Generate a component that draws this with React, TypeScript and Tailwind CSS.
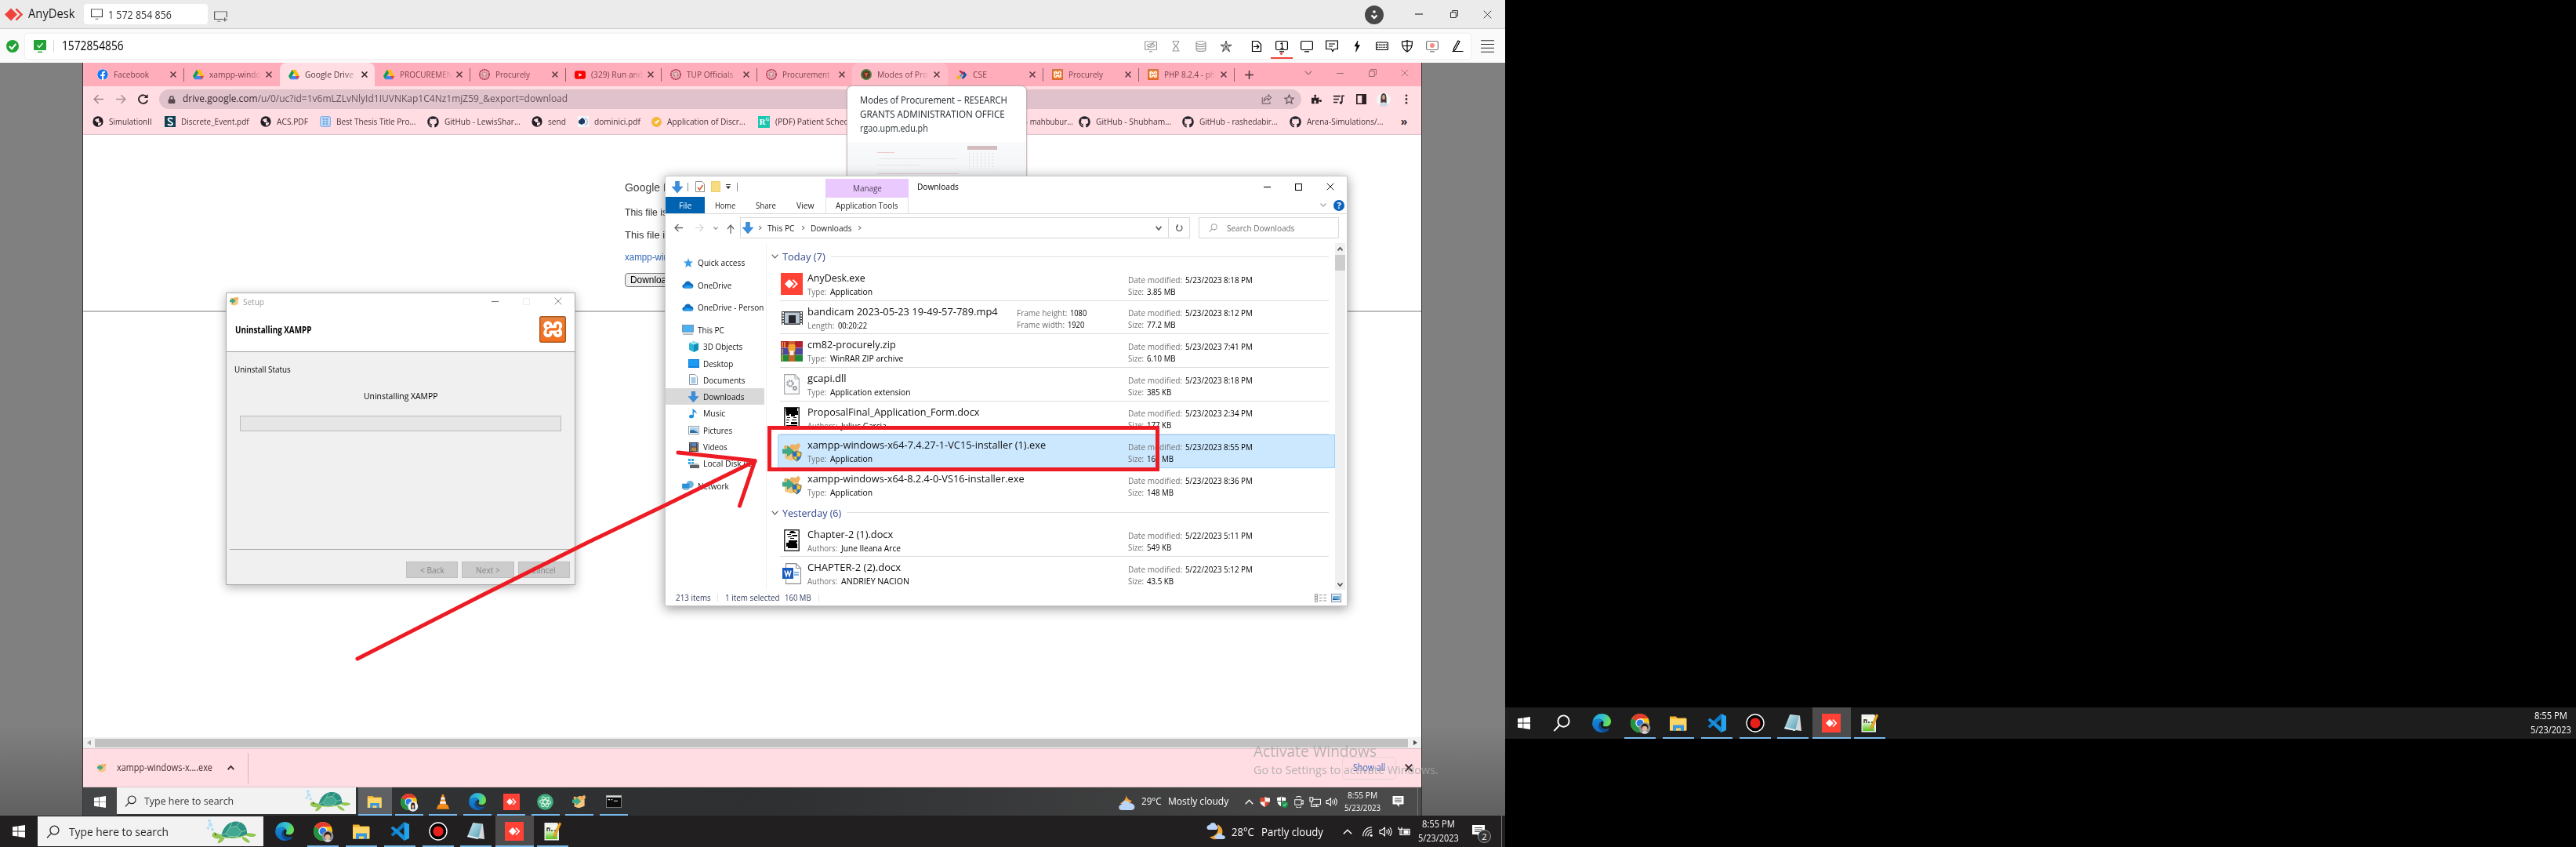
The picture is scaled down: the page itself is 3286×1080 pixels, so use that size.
import { useLayoutEffect, useRef, type ReactNode } from "react";
import { FaGithub, FaFacebook, FaLock, FaPuzzlePiece } from "react-icons/fa";

/* Single-line label squeezed horizontally to the width class it is given. */
function Fit({ c, children }: { c: string; children: ReactNode }) {
  const outer = useRef<HTMLSpanElement>(null);
  const inner = useRef<HTMLSpanElement>(null);
  useLayoutEffect(() => {
    const o = outer.current!;
    const i = inner.current!;
    i.style.transform = `scaleX(${parseFloat(getComputedStyle(o).width) / i.offsetWidth})`;
  });
  return (
    <span ref={outer} className={`inline-block shrink-0 whitespace-nowrap ${c}`}>
      <span ref={inner} className="inline-block origin-left">
        {children}
      </span>
    </span>
  );
}

function S({ c = "size-4", sw = 1.2, children, vb = "0 0 16 16" }: { c?: string; sw?: number; children: ReactNode; vb?: string }) {
  return (
    <svg viewBox={vb} className={`shrink-0 ${c}`} fill="none" stroke="currentColor" strokeWidth={sw} preserveAspectRatio="none">
      {children}
    </svg>
  );
}

/* ---------- generic glyphs ---------- */
const X = ({ c, sw = 1.2 }: { c: string; sw?: number }) => (
  <S c={c} sw={sw} vb="0 0 10 10"><path d="M.7.7l8.6 8.6M9.3.7L.7 9.3" /></S>
);
const Minus = ({ c }: { c: string }) => <S c={c} vb="0 0 10 10"><path d="M0 5h10" /></S>;
const Restore = ({ c }: { c: string }) => (
  <S c={c} sw={1} vb="0 0 10 10"><path d="M.5 2.7h6.8v6.8H.5zM2.6 2.7V.5h6.9v6.8H7.3" /></S>
);
const Down = ({ c, sw = 1.2 }: { c: string; sw?: number }) => <S c={c} sw={sw} vb="0 0 10 6"><path d="M.7.7L5 5 9.3.7" /></S>;
const Up = ({ c, sw = 1.2 }: { c: string; sw?: number }) => <S c={c} sw={sw} vb="0 0 10 6"><path d="M.7 5.3L5 1l4.3 4.3" /></S>;
const Right = ({ c }: { c: string }) => <S c={c} sw={1.5} vb="0 0 6 10"><path d="M1.5 1.5L4.8 5 1.5 8.5" /></S>;
const Lens = ({ c, sw = 1.3 }: { c: string; sw?: number }) => (
  <S c={c} sw={sw}><circle cx="9.8" cy="6.2" r="5.2" /><path d="M6 10L1 15.3" /></S>
);
const Star = ({ c, sw = 1.2 }: { c: string; sw?: number }) => (
  <S c={c} sw={sw}><path d="M8 1.3l2 4.7 5 .4-3.8 3.3 1.2 5L8 12l-4.4 2.7 1.2-5L1 6.4 6 6z" /></S>
);

/* ---------- logos ---------- */
const Drive = () => (
  <svg viewBox="0 0 16 14" className="size-[14px] shrink-0">
    <path d="M5.3 0h5.4L16 9.2h-5.3z" fill="#ffba00" />
    <path d="M5.3 0L8 4.7 2.7 14 0 9.2z" fill="#0f9d58" />
    <path d="M5.3 9.2H16L13.3 14H2.7z" fill="#4285f4" />
    <path d="M10.7 9.2H16L13.3 14z" fill="#ea4335" />
  </svg>
);
const Seal = ({ green = false }: { green?: boolean }) => (
  <svg viewBox="0 0 16 16" className="size-[14px] shrink-0">
    <circle cx="8" cy="8" r="7" fill={green ? "#2f5b33" : "#e9b8bf"} stroke={green ? "#5b7a3c" : "#b93a55"} strokeWidth="2" strokeDasharray={green ? "" : "2.6 .5"} />
    <circle cx="8" cy="8" r="4.4" fill={green ? "#7d2a24" : "#cf8f98"} />
    <path d="M6 6l2 1.5L10 6M8 7v4" stroke={green ? "#d8a24a" : "#f6e2e4"} strokeWidth="1.2" fill="none" />
  </svg>
);
const YouTube = () => (
  <svg viewBox="0 0 16 12" className="h-[11px] w-[14px] shrink-0"><rect width="16" height="12" rx="2.8" fill="#f00" /><path d="M6.2 3.4v5.2L11 6z" fill="#fff" /></svg>
);
const Cse = () => (
  <svg viewBox="0 0 16 14" className="h-[11px] w-[14px] shrink-0">
    <path d="M3 0h4l4 5-2 2z" fill="#d5202f" /><path d="M9 2l3 0 4 5-5 6H7l4-6z" fill="#1d4fa1" /><path d="M0 7l3 3 3-3 1 3-3 4H0z" fill="#f6b516" /><path d="M4 6h4l1 1-3 4z" fill="#36a5c8" />
  </svg>
);
const Xampp = ({ c }: { c: string }) => (
  <svg viewBox="0 0 34 34" className={`shrink-0 ${c}`}>
    <defs><linearGradient id="xg" x1="0" y1="0" x2="0" y2="1"><stop offset="0" stopColor="#e08a50" /><stop offset=".18" stopColor="#ee7a2e" /><stop offset="1" stopColor="#f37021" /></linearGradient></defs>
    <rect x=".7" y=".7" width="32.6" height="32.6" rx="2" fill="url(#xg)" stroke="#a8571e" strokeWidth="1.4" />
    <g fill="#fff">
      <circle cx="11" cy="12.3" r="5.7" /><circle cx="23.500" cy="12.300" r="5.700" /><circle cx="11" cy="21.500" r="5.700" /><circle cx="23.500" cy="21.500" r="5.700" />
      <path d="M11 12h12.500v10H11z" />
    </g>
    <g fill="none" stroke="#f37021" strokeWidth="3.300" strokeLinecap="round" strokeLinejoin="round">
      <path d="M11 12.400v.1M23.500 12v3.300l-1.500 1.500h-8.500l-2.500 2v2.700M23.500 21.500v.1" />
    </g>
  </svg>
);
const AnyMark = ({ c, a = "#ef443b" }: { c: string; a?: string }) => (
  <svg viewBox="0 0 24 16" className={`shrink-0 ${c}`}>
    <path d="M8 0l8 8-8 8-8-8z" fill={a} />
    <path d="M13.500 1.800L15.300 0l8 8-8 8-1.800-1.800L19.700 8z" fill={a} />
  </svg>
);
const AnyTile = ({ c }: { c: string }) => (
  <span className={`flex shrink-0 items-center justify-center bg-[#ff4136] ${c}`}><AnyMark c="h-[42%] w-[62%]" a="#fff" /></span>
);
const Win = ({ c, f = "#fff" }: { c: string; f?: string }) => (
  <svg viewBox="0 0 16 16" className={`shrink-0 ${c}`} fill={f}><path d="M0 2.300l6.500-.9v6.200H0zM7.300 1.300L16 0v7.600H7.300zM0 8.400h6.500v6.200L0 13.700zM7.300 8.400H16V16l-8.700-1.300z" /></svg>
);
const Edge = ({ c }: { c: string }) => (
  <svg viewBox="0 0 24 24" className={`shrink-0 ${c}`}>
    <defs>
      <linearGradient id="e1" x1="0" y1="0" x2="1" y2=".3"><stop offset="0" stopColor="#1f9be0" /><stop offset=".6" stopColor="#35c1d0" /><stop offset="1" stopColor="#66e04e" /></linearGradient>
      <linearGradient id="e2" x1="0" y1="0" x2="0" y2="1"><stop offset="0" stopColor="#1688d6" /><stop offset="1" stopColor="#1066bd" /></linearGradient>
    </defs>
    <path d="M.3 11C1.200 4.500 6 0 12.200 0 19 0 24 4.800 24 10c0 4-3 6.300-6.500 6.300-2.700 0-4-1-3.800-2 .2-.7.900-1 .9-2.600C14.600 9 12 6.800 8.500 6.800 4.500 6.800 1.600 8.600.3 11z" fill="url(#e1)" />
    <path d="M.2 11.500C1.500 8.300 5 6.600 8.400 6.800c2.600.1 4.700 1.300 5.600 2.900-1.700-.5-3.800 1-3.800 3.800 0 4 4 6.800 8 6.300 2-.2 3.300-.8 3.800-.7-2 3-5.600 4.900-9.800 4.900C5 24-.5 18 .2 11.500z" fill="url(#e2)" />
    <path d="M10.300 12.500c-.9 4.500 3 8.700 7.900 8 2-.2 3.500-1.200 3.900-1.100-1 1.800-3 3.300-5.200 4.100C10 22.500 6.500 17.500 8.600 13c.6-1.400 1.500-2.600 2.900-3.200-.6.6-1 1.500-1.200 2.700z" fill="#0c4a91" />
  </svg>
);
const Chrome = ({ c, girl = false }: { c: string; girl?: boolean }) => (
  <svg viewBox="0 0 24 24" className={`shrink-0 overflow-visible ${c}`}>
    <circle cx="12" cy="12" r="12" fill="#fbc116" />
    <path d="M12 12L1.600 6A12 12 0 0 1 22.400 6H12z" fill="#e33b2e" />
    <path d="M12 12L1.600 6A12 12 0 0 0 12 24l5.200-9z" fill="#229342" />
    <circle cx="12" cy="12" r="5.700" fill="#fff" /><circle cx="12" cy="12" r="4.500" fill="#2a79e8" />
    <circle cx="18" cy="18.500" r="7.300" fill={girl ? "#f2f2f4" : "#8d9094"} />
    <path d={girl ? "M15 24c0-10 0-11 3-11s3 1 3 11z" : "M13.500 18c0-7 9-7 9 0l-1 1h-7z"} fill="#2c211e" />
    <ellipse cx="18" cy="18.800" rx={girl ? 1.700 : 3.200} ry={girl ? 2.500 : 3.700} fill="#e4b496" />
    {!girl && <path d="M14.500 17.500c1-2 6-2 7 0l.5-2.500c-2-2-6-2-8 0z" fill="#2c211e" />}
    <path d="M14 24c1-2.500 7-2.500 8 0-2 2.200-6 2.200-8 0z" fill={girl ? "#dfe3ea" : "#d8d8d8"} />
  </svg>
);
const Explorer = ({ c }: { c: string }) => (
  <svg viewBox="0 0 24 24" className={`shrink-0 ${c}`}>
    <path d="M1 3.500h8l1.500 2H22v16H1z" fill="#f3b32c" /><path d="M1 6.500h21.500v15H1z" fill="#fdd667" />
    <path d="M5 22v-7.500h14V22h-4v-3.600h-6V22z" fill="#3a96dd" />
  </svg>
);
const VsCode = ({ c }: { c: string }) => (
  <svg viewBox="0 0 24 24" className={`shrink-0 ${c}`}>
    <path d="M17.500 0L24 3v18l-6.500 3z" fill="#24a3ee" />
    <path d="M17.500 0v6.700L3.200 18.500.5 16z" fill="#0e79c4" /><path d="M17.500 24v-6.700L3.200 5.500.5 8z" fill="#1a8fdc" />
  </svg>
);
const Rec = ({ c }: { c: string }) => (
  <svg viewBox="0 0 24 24" className={`shrink-0 ${c}`}><circle cx="12" cy="12" r="11" fill="#000" stroke="#fff" strokeWidth="1.400" /><circle cx="12" cy="12" r="6.600" fill="#e8201c" /></svg>
);
const Notepad = ({ c }: { c: string }) => (
  <svg viewBox="0 0 24 24" className={`shrink-0 ${c}`}>
    <defs><linearGradient id="np" x1="0" y1="0" x2="1" y2="1"><stop offset="0" stopColor="#cdeaf1" /><stop offset="1" stopColor="#4f9bb0" /></linearGradient></defs>
    <path d="M8 1l13 1.500L23 22l-8-1z" fill="#d5d8da" /><path d="M8 1.500l12 1.500-5 19L1 19z" fill="url(#np)" /><path d="M1 19l14 3 .5-1.700L2 17z" fill="#e9f3f5" />
  </svg>
);
const Npp = ({ c }: { c: string }) => (
  <svg viewBox="0 0 24 24" className={`shrink-0 ${c}`}>
    <defs><linearGradient id="pp" x1="0" y1="0" x2="0" y2="1"><stop offset=".3" stopColor="#f5fbe9" /><stop offset="1" stopColor="#5cc31c" /></linearGradient></defs>
    <path d="M1.500 1H18l2 3v19.500H1.500z" fill="#eee" /><path d="M3 4h15v18H3z" fill="url(#pp)" />
    <path d="M5 7v5M5 8h3v4M10 11h2M14 11h2" stroke="#333" strokeWidth="1.400" fill="none" />
    <path d="M20.500.5l2.500 1.500-7 16-3 2 .5-3.500z" fill="#f3a91f" stroke="#a86a12" strokeWidth=".5" />
  </svg>
);
const Vlc = ({ c }: { c: string }) => (
  <svg viewBox="0 0 24 24" className={`shrink-0 ${c}`} preserveAspectRatio="none">
    <path d="M4 16h16l3 6.500H1z" fill="#f08a16" /><path d="M10.500 1h3l5 17c-3 2-10 2-13 0z" fill="#f28c1a" />
    <path d="M9.300 5h5.400l1 3.500H8.300zM7.500 11h9l1 3.500h-11z" fill="#f1f1f1" />
  </svg>
);
const Atom = ({ c }: { c: string }) => (
  <svg viewBox="0 0 24 24" className={`shrink-0 ${c}`}>
    <circle cx="12" cy="12" r="11.800" fill="#3fae7c" />
    <g fill="none" stroke="#e4f5ec" strokeWidth="1.200"><ellipse cx="12" cy="12" rx="3" ry="8" transform="rotate(-25 12 12)" /><ellipse cx="12" cy="12" rx="3" ry="8" transform="rotate(35 12 12)" /><ellipse cx="12" cy="12" rx="3" ry="8" transform="rotate(95 12 12)" /></g>
  </svg>
);
const Cmd = ({ c }: { c: string }) => (
  <svg viewBox="0 0 24 20" className={`shrink-0 ${c}`} preserveAspectRatio="none"><rect x=".5" y=".5" width="23" height="19" fill="#0b0b0b" stroke="#8f8f8f" /><path d="M.5.500h23v3H.5z" fill="#d8d8d8" /><path d="M3 7h3M8 7h2M12 9h6" stroke="#e4e4e4" strokeWidth="1.400" /></svg>
);
const Box = ({ c, shield = false }: { c: string; shield?: boolean }) => (
  <svg viewBox="0 0 28 28" className={`shrink-0 overflow-visible ${c}`}>
    <path d="M4 4l7 2 2-3h3l3 1 5-3 3 4-3 5v13l-11 4-9-3V10L2 7z" fill="#eeb061" />
    <path d="M5 10l9 1.500 10-1.500v13l-11 4-8-3z" fill="#f6c77f" />
    <path d="M0 10h7V5l11 8.500L7 22v-5H0z" fill="#3fa887" />
    {shield && (
      <g>
        <path d="M15 15c3-.3 4.500-1 6.500-2.500 2 1.500 3.200 2.200 6.500 2.500.3 6.500-2 10.500-6.500 13-4.500-2.500-6.800-6.500-6.500-13z" fill="#f7c32b" stroke="#3d4a56" strokeWidth="1" />
        <path d="M15.500 15.400c2.800-.3 4.300-1 6-2.200v8h-5.300zM21.500 21.200h5.500c-1 3-2.700 5-5.500 6.300z" fill="#1c6fd0" />
      </g>
    )}
  </svg>
);
const Turtle = ({ c }: { c: string }) => (
  <svg viewBox="0 0 64 32" className={`shrink-0 ${c}`} preserveAspectRatio="none">
    <g fill="#bfe6fb" stroke="#86c8ee" strokeWidth=".5"><circle cx="4" cy="2.500" r="1.600" /><circle cx="5.500" cy="7.500" r="2.200" /><circle cx="2.500" cy="12" r="1.300" /><circle cx="8" cy="13.500" r="1.500" /></g>
    <path d="M22 20c-4 1-7-1-11-3-4 1-5 6 0 7.500 4 2 8 .5 12-1.500z" fill="#93c552" />
    <path d="M20 23c-3 2-5 5-5.500 8 3 1 7-2 9.500-7zM50 18c5 .5 9 0 14 2-1 4-8 4-14 1zM47 23c4 1 8 4 9 7-3 2-8-2-11-6z" fill="#93c552" />
    <path d="M19 22C22 9 30 3 39 3.500c9 .5 14 8 13 17-10 4-24 6-33 1.500z" fill="#2d9186" />
    <path d="M25 19l5-8 9-1.500 6 7-4 6H29z" fill="#43a892" stroke="#8bd3a5" strokeWidth=".9" />
    <path d="M30 11l3-6M39 9.500l4-5.500M45 16.500l7-2M25 19l-6 2M29 22.500v1.500M41 22.500l1 1" stroke="#8bd3a5" strokeWidth=".9" fill="none" />
    <path d="M19 22c9 4.500 23 3 33-1.500" stroke="#b7d96f" strokeWidth="1.200" fill="none" />
    <circle cx="12" cy="19.800" r=".9" fill="#222" />
  </svg>
);
const Moon = ({ c, two = false }: { c: string; two?: boolean }) => (
  <svg viewBox="0 0 24 24" className={`shrink-0 ${c}`}>
    <path d={two ? "M14 3c6 3 9 10 4 16-4 4.500-11 4-14 0 8 0 13-7 10-16z" : "M11 1c0 5 4 9 8 9-2 6-9 9-17 4 6-2 9-7 9-13z"} fill="#f3a32d" />
    <path d={two ? "M3 10c-4-1-3-6 1-6 1-4 8-4 8 0 4 1 3 6 0 6zM13 22c-4-1-3-5 0-5 1-4 7-3 7 0 5 0 5 5 1 5z" : "M4 24c-6-1-4-8 0-8 1-7 10-8 12-2 8-1 10 9 3 10z"} fill="#b9d4f8" />
  </svg>
);
const Volume = ({ c }: { c: string }) => (
  <S c={c} sw={1.100}><path d="M1 6v4h2.500L7 13V3L3.500 6zM9 6c1 1 1 3 0 4M11 4.500c2 2 2 5 0 7M13 3c3 3 3 7 0 10" /></S>
);
const Note = ({ c }: { c: string }) => (
  <svg viewBox="0 0 16 16" className={`shrink-0 ${c}`}><path d="M0 0h16v12H9.500v4L6 12H0z" fill="#fff" /><path d="M3 3.500h10M3 6h10M3 8.500h10" stroke="#444" strokeWidth="1" /></svg>
);

/* ---------- AnyDesk chrome ---------- */
function TitleBar() {
  return (
    <div className="flex h-[37px] items-center border-b border-[#cdcdcd] bg-[#ebebeb] pl-1.5 text-[15.500px] text-[#1a1a1a]">
      <AnyMark c="h-[17px] w-6" />
      <Fit c="ml-1.5 w-[60px] font-medium">AnyDesk</Fit>
      <div className="ml-[11px] flex h-[26px] w-[158px] items-center rounded-sm bg-white pl-[9px] text-[14px] text-[#333]">
        <S c="h-[14px] w-[15px] text-[#333]" sw={1.100}><path d="M.6 1h14.800v11H.6zM6 15h4" /></S>
        <Fit c="ml-[7px] w-[81px]">1 572 854 856</Fit>
      </div>
      <S c="ml-2 mt-1.5 h-[14px] w-[17px] text-[#555]" sw={1.100}><path d="M10 12H.6V1h14.800v8M13 9.500v6M10 12.500h6M4 15h4" /></S>
      <div className="ml-auto flex items-center pr-[17px] text-[#333]">
        <svg viewBox="0 0 24 24" className="mt-px size-6"><circle cx="12" cy="12" r="12" fill="#484848" /><circle cx="12" cy="8" r="1.800" fill="#fff" /><path d="M8.500 12.500L12 16l3.500-3.500" stroke="#fff" strokeWidth="2.400" fill="none" /></svg>
        <Minus c="ml-[40px] size-[10px]" />
        <Restore c="ml-[35px] size-[10px]" />
        <X c="ml-[32px] size-[11px]" sw={0.9} />
      </div>
    </div>
  );
}

function Cell({ children, on = false, dim = false }: { children: ReactNode; on?: boolean; dim?: boolean }) {
  return (
    <div className={`relative flex w-8 items-center justify-center ${dim ? "text-[#999]" : "text-black"}`}>
      <S c="size-4" sw={1.200}>{children}</S>
      {on && <span className="absolute -bottom-[8px] left-[2px] h-[2px] w-7 bg-[#ef443b]" />}
      {on && <span className="absolute -bottom-[3px] left-[14px] size-[3px] rounded-full bg-[#ef443b]" />}
    </div>
  );
}

function AddressBar() {
  return (
    <div className="flex h-[43px] items-center bg-[#fafafa] pl-2">
      <svg viewBox="0 0 16 16" className="size-4 shrink-0"><circle cx="8" cy="8" r="8" fill="#23a335" /><path d="M4 8l3 3.500L12.300 5" stroke="#fff" strokeWidth="2" fill="none" /></svg>
      <div className="ml-2 flex h-8 w-[1844px] items-center rounded-sm bg-white pl-[11px] shadow-[0_0_2px_1px_#eeeeee]">
        <svg viewBox="0 0 16 16" className="size-4"><rect width="16" height="13" rx="1" fill="#23a335" /><path d="M4.500 6.500l2.500 3L11.500 4" stroke="#fff" strokeWidth="1.200" fill="none" /><path d="M5 15.300h6" stroke="#23a335" strokeWidth="1.400" /></svg>
        <span className="ml-[9px] h-4 w-px bg-[#d5d5d5]" />
        <Fit c="ml-[10px] w-[79px] text-[15.500px] text-black">1572854856</Fit>
        <div className="ml-auto flex pr-px">
          <Cell dim><rect x=".6" y="2" width="14.800" height="10.500" rx="1" /><path d="M3 7c2-3 8-3 10 0-2 3-8 3-10 0zM4 11l8-8M6 14.800h4" /></Cell>
          <Cell dim><path d="M3.500 1.500h9M3.500 14h9M4.500 1.500c0 4 3 4.500 3 6.200S4.500 10 4.500 14M11.500 1.500c0 4-3 4.500-3 6.200s3 2.300 3 6.300" /></Cell>
          <Cell dim><ellipse cx="8" cy="3.500" rx="6" ry="2" /><path d="M2 3.500v9c0 2.600 12 2.600 12 0v-9M2 6.500c0 2.600 12 2.600 12 0M2 9.500c0 2.600 12 2.600 12 0" /></Cell>
          <Cell><path d="M8 1.300l1.700 5H15l-4.300 3.100 1.700 5.300L8 11.500l-4.400 3.200 1.700-5.300L1 6.300h5.300zM8 1.300v10.200M1 6.300l7 2 7-2M3.600 14.700L8 8.300l4.400 6.400" strokeWidth=".6" /></Cell>
          <span className="w-[7px]" />
          <Cell><path d="M2.500 14.500v-13h7l4 4v9zM4 8.500h6.500M8 5.800l2.800 2.700L8 11.200" /></Cell>
          <Cell on><rect x=".6" y="1.500" width="14.800" height="11" rx="1.500" /><path d="M6.500 5l2-1.300V11M6.500 10.700h4M5 14.800h6" /></Cell>
          <Cell><rect x=".6" y="1.500" width="14.800" height="11" rx="1.500" /><path d="M5 14.800h6" /></Cell>
          <Cell><path d="M.6 1h14.800v10.500H11L9 14.500l-1.500-3H.6zM4 5h8M4 8h5" /></Cell>
          <Cell><path d="M9 1L5 8h3l-1.500 7L11.500 6.500H8.300z" fill="#000" strokeWidth=".6" /></Cell>
          <Cell><rect x=".6" y="3" width="14.800" height="9.500" rx="1" /><path d="M2 5.500h12M2 7.500h12M2 9.500h12" strokeDasharray="1 .8" /></Cell>
          <Cell><path d="M1.500 2C5 2 7 1.700 8 .8 9 1.700 11 2 14.500 2c0 6-1 10-6.500 13C2.500 12 1.500 8 1.500 2zM8 1v14M1.500 7.500h13" /></Cell>
          <Cell><g stroke="#777"><rect x=".6" y="1.500" width="14.800" height="11" rx="1.500" /><path d="M5 14.800h6" /></g><circle cx="8" cy="7" r="3" fill="#f58c87" stroke="none" /></Cell>
          <Cell><path d="M1.500 14.500h14M9 1L3.500 11l-.3 3 2.300-2L11 2z" /></Cell>
        </div>
      </div>
      <S c="ml-[13px] h-4 w-[17px] text-[#333]" sw={1}><path d="M0 .7h16M0 5.500h16M0 10.300h16M0 15.200h16" /></S>
    </div>
  );
}

/* ---------- remote browser ---------- */
type TabData = { icon: ReactNode; t: string; w: string; state?: "active" | "hover"; sep?: boolean };
const tabs: TabData[] = [
  { icon: <FaFacebook className="size-[14px] rounded-full bg-white text-[#1877f2]" />, t: "Facebook", w: "w-[45px]", sep: true },
  { icon: <Drive />, t: "xampp-windo", w: "w-[66px]" },
  { icon: <Drive />, t: "Google Drive", w: "w-[62px]", state: "active" },
  { icon: <Drive />, t: "PROCUREMEN", w: "w-[67px]", sep: true },
  { icon: <Seal />, t: "Procurely", w: "w-[44px]", sep: true },
  { icon: <YouTube />, t: "(329) Run and", w: "w-[66px]", sep: true },
  { icon: <Seal />, t: "TUP Officials", w: "w-[59px]", sep: true },
  { icon: <Seal />, t: "Procurement", w: "w-[61px]" },
  { icon: <Seal green />, t: "Modes of Pro", w: "w-[65px]", state: "hover" },
  { icon: <Cse />, t: "CSE", w: "w-[18px]", sep: true },
  { icon: <Xampp c="size-[14px]" />, t: "Procurely", w: "w-[44px]", sep: true },
  { icon: <Xampp c="size-[14px]" />, t: "PHP 8.2.4 - ph", w: "w-[65px]", sep: true },
];

function TabStrip() {
  return (
    <div className="flex h-[30px] items-center bg-[#ffadbb] pl-[7px] text-[11.500px] text-[#7d424d]">
      {tabs.map((tab, i) => (
        <div
          key={i}
          className={`relative flex h-full w-[121.8px] shrink-0 items-center pl-[11px] ${
            tab.state === "active" ? "rounded-t-lg bg-[#ffdde3] text-[#4d373d]" : tab.state === "hover" ? "rounded-t-lg bg-[#ffbcc8]" : ""
          }`}
        >
          {tab.icon}
          <div className="ml-[7px] w-[67px] overflow-hidden [mask-image:linear-gradient(to_right,#000_75%,transparent)]"><Fit c={tab.w}>{tab.t}</Fit></div>
          <X c={`ml-[5px] size-[8px] ${tab.state === "active" ? "text-[#2b2024]" : "text-[#5c3840]"}`} sw={1.900} />
          {tab.sep && <span className="absolute right-0 top-[7px] h-[17px] w-px bg-[#8f6069]" />}
        </div>
      ))}
      <S c="ml-[13px] size-[11px] text-[#4c3238]" sw={2.200}><path d="M8 0v16M0 8h16" /></S>
      <div className="mb-1 ml-auto flex items-center pr-[16px] text-[#9c6a74]">
        <Down c="h-[6px] w-[10px]" />
        <Minus c="ml-[31px] size-[9px]" />
        <Restore c="ml-[32px] size-[10px]" />
        <X c="ml-[31px] size-[10px]" sw={0.9} />
      </div>
    </div>
  );
}

const Globe = () => (
  <svg viewBox="0 0 16 16" className="size-[14px] shrink-0"><circle cx="8" cy="8" r="7.600" fill="#1f1d22" /><path d="M3 6c2-2 4-3 7-2.500L9 6l2 2-2 1H6L5 7zM8 10l5-1c0 3-2 5-5 5z" fill="#ffdde3" /></svg>
);
const gh = <FaGithub className="size-[15px] shrink-0 text-[#24242c]" />;
const bookmarks: { icon: ReactNode; t: string; w: string; cell: string }[] = [
  { icon: <Globe />, t: "SimulationII", w: "w-[55px]", cell: "w-[91.6px]" },
  { icon: <svg viewBox="0 0 14 14" className="size-[14px] shrink-0"><rect width="14" height="14" fill="#123f52" /><path d="M10 4C9 2 4.500 2.200 4.500 4.600S10 7.500 10 9.800 5 12 4 10" stroke="#fff" strokeWidth="1.800" fill="none" /></svg>, t: "Discrete_Event.pdf", w: "w-[87px]", cell: "w-[122.4px]" },
  { icon: <Globe />, t: "ACS.PDF", w: "w-[40px]", cell: "w-[75.8px]" },
  { icon: <svg viewBox="0 0 14 14" className="size-[14px] shrink-0"><rect x=".6" y=".6" width="12.800" height="12.800" rx="2.500" fill="#cfe1f6" stroke="#7fb0e6" strokeWidth="1.200" /><path d="M3 4h8M3 7h8M3 10h8M5 2v10M9 2v10" stroke="#6ba2e0" /></svg>, t: "Best Thesis Title Pro...", w: "w-[101px]", cell: "w-[136.6px]" },
  { icon: gh, t: "GitHub - LewisShar...", w: "w-[97px]", cell: "w-[133.5px]" },
  { icon: <Globe />, t: "send", w: "w-[23px]", cell: "w-[58.5px]" },
  { icon: <svg viewBox="0 0 14 14" className="size-[14px] shrink-0"><rect width="14" height="14" fill="#f3f6fa" /><path d="M1 6l5-4 3 3v4L5 11 1 9z" fill="#1c3c62" /><path d="M9 3c5 1 4 8-1 9" stroke="#8aa6c6" fill="none" strokeDasharray="1.500 1" strokeWidth="1.500" /></svg>, t: "dominici.pdf", w: "w-[59px]", cell: "w-[94.2px]" },
  { icon: <svg viewBox="0 0 14 14" className="size-[13px] shrink-0"><circle cx="7" cy="7" r="7" fill="#f6b63c" /><path d="M3.500 7l3 3 5-6c-3 0-4 1-5 3z" fill="#fff" /></svg>, t: "Application of Discr...", w: "w-[100px]", cell: "w-[136.4px]" },
  { icon: <span className="flex size-[15px] shrink-0 items-center justify-center bg-[#18c6b2] font-['Liberation_Serif'] text-[11px] font-bold leading-none text-white">R<sup className="text-[6px]">G</sup></span>, t: "(PDF) Patient Schedu...", w: "w-[108px]", cell: "w-[284.600px]" },
  { icon: gh, t: "GitHub - mahbubur...", w: "w-[95px]", cell: "w-[124.300px]" },
  { icon: gh, t: "GitHub - Shubham...", w: "w-[96px]", cell: "w-[131.800px]" },
  { icon: gh, t: "GitHub - rashedabir...", w: "w-[100px]", cell: "w-[136.700px]" },
  { icon: gh, t: "Arena-Simulations/...", w: "w-[98px]", cell: "w-[142px]" },
];

function BrowserBars() {
  return (
    <>
      <div className="flex h-[33px] items-center bg-[#ffdde3] pl-[13px] text-[#5a4349]">
        <S c="size-[13px] text-[#9f858b]" sw={1.900}><path d="M16 8H1.500M8 1.500L1.500 8 8 14.500" /></S>
        <S c="ml-[16px] size-[13px] text-[#a98f95]" sw={1.900}><path d="M0 8h14.500M8 1.500L14.500 8 8 14.500" /></S>
        <S c="ml-[15px] size-[13px] text-[#2d2327]" sw={2.300}><path d="M14 4.500A7 6.500 0 1 0 15 9.500" /><path d="M15.500 0v6H9.500z" fill="currentColor" stroke="none" /></S>
        <div className="ml-[14px] flex h-[25px] w-[1457px] items-center rounded-full bg-[#dfc2cb] pl-[11px] pr-[9px]">
          <FaLock className="size-[10px] text-[#5a4a50]" />
          <Fit c="ml-[9px] w-[491px] text-[12.500px] text-[#6b535b]"><span className="text-[#3c2a30]">drive.google.com</span>/u/0/uc?id=1v6mLZLvNlyId1IUVNKap1C4Nz1mjZ59_&export=download</Fit>
          <S c="ml-auto size-[13px] text-[#7c666d]" sw={1.400}><path d="M1.500 5v10h12v-3M4 11c0-5 3-7 7-7V1l4.500 4.500L11 10V7C8 7 6 8 4 11z" /></S>
          <Star c="ml-[16px] size-[13px] text-[#6d585f]" sw={1.600} />
        </div>
        <FaPuzzlePiece className="ml-[13px] size-[13px] text-[#2b2126]" />
        <S c="ml-[15px] size-[14px] text-[#2b2126]" sw={1.800}><path d="M0 3h10M0 7.500h8M0 12h6M16 2.500h-3.500V12" /><circle cx="10.800" cy="12.500" r="2" fill="currentColor" stroke="none" /></S>
        <S c="ml-[15px] size-[13px] text-[#2b2126]" sw={2}><path d="M1 1h14v14H1z" /><path d="M10 1h5v14h-5z" fill="currentColor" /></S>
        <svg viewBox="0 0 18 18" className="ml-[13px] size-[18px]"><circle cx="9" cy="9" r="9" fill="#f4f4f6" /><path d="M5.500 14C5 4 6 1 9 1s4 3 3.500 13z" fill="#4d3a34" /><ellipse cx="9" cy="6" rx="1.800" ry="3" fill="#d8a98e" /><path d="M3.500 16c1-5 10-5 11 0-3 2.800-8 2.800-11 0z" fill="#cfd8e6" /></svg>
        <svg viewBox="0 0 4 14" className="ml-[18px] h-[13px] w-1" fill="#3a2e33"><circle cx="2" cy="2" r="1.500" /><circle cx="2" cy="7" r="1.500" /><circle cx="2" cy="12" r="1.500" /></svg>
      </div>
      <div className="flex h-[29px] items-center border-b border-[#dcc3ca] bg-[#ffdde3] pb-1 pl-[12.400px] text-[11.500px] text-[#453238]">
        {bookmarks.map((b, i) => (
          <div key={i} className={`flex shrink-0 items-center gap-[7px] ${b.cell}`}>{b.icon}<Fit c={b.w}>{b.t}</Fit></div>
        ))}
        <span className="text-[14px] font-bold leading-none text-[#33272b]">»</span>
      </div>
    </>
  );
}

function HoverCard() {
  return (
    <div className="absolute left-[975px] top-[30px] h-[160px] w-[228px] overflow-hidden rounded-t-md bg-white pt-[9px] text-[12px] leading-[18px] text-[#2c3338] shadow-[0_0_2px_1px_#b9a5aa]">
      <div className="flex flex-col pl-[16px]">
        <Fit c="w-[188px] font-medium text-[#1a2026]">Modes of Procurement – RESEARCH</Fit>
        <Fit c="w-[185px] font-medium text-[#1a2026]">GRANTS ADMINISTRATION OFFICE</Fit>
        <Fit c="w-[87px]">rgao.upm.edu.ph</Fit>
      </div>
      <div className="mt-[8px] flex h-[90px] justify-between bg-linear-to-b from-[#f9fafc] to-[#eceef0] pl-[38px] pr-[37px] pt-[5px]">
        <div className="flex flex-col gap-[7px] pt-[8px]">
          <span className="h-px w-[22px] bg-[#efc9c9]" /><span className="ml-[5px] h-px w-[96px] bg-[#e2e4e7]" /><span className="h-px w-[56px] bg-[#e4e6e8]" /><span className="mt-[3px] h-px w-[104px] bg-[#e8cfd0]" />
        </div>
        <div className="flex flex-col gap-[3px]"><span className="h-[5px] w-[38px] bg-[#d3bcbf]" /><span className="h-[22px] w-[36px] bg-[radial-gradient(#dcdee2_0.800px,transparent_1px)] bg-[length:5px_4px]" /></div>
      </div>
    </div>
  );
}

function DrivePage() {
  return (
    <div className="flex h-[768px] flex-col bg-white font-['Liberation_Sans'] text-[12.500px] text-[#333]">
      <div className="flex h-[226px] flex-col border-b-2 border-[#bdbdbd] pl-[690.500px] pt-[57px]">
        <Fit c="w-[82px] text-[15px] leading-5 text-[#444]">Google Drive</Fit>
        <Fit c="mt-[13px] w-[270px] leading-[18px]">This file is too large for Google to scan for viruses.</Fit>
        <Fit c="mt-[11px] w-[300px] leading-[18px]">This file is executable and may harm your computer.</Fit>
        <Fit c="mt-[10px] w-[250px] leading-[18px] text-[#3367b8]">xampp-windows-x64-7.4.27-1-VC15-installer.exe</Fit>
        <div className="mt-[11px] h-[18px] w-[96px] rounded-sm border border-[#767676] bg-[#efefef] pl-[6px] leading-[16px] text-black"><Fit c="w-[96px]">Download anyway</Fit></div>
      </div>
    </div>
  );
}

/* ---------- setup dialog ---------- */
function SetupDialog() {
  return (
    <div className="absolute left-[182px] top-[292.700px] flex h-[373px] w-[446px] flex-col border border-[#a9a9a9] bg-[#f0f0f0] text-[11.500px] text-black shadow-[0_3px_12px_rgba(0,0,0,0.300)]">
      <div className="flex h-[75px] flex-col border-b border-[#a0a0a0] bg-white">
        <div className="flex h-[21px] items-center pl-1 text-[#999]">
          <Box c="size-[12px]" />
          <Fit c="ml-[5px] w-[27px]">Setup</Fit>
          <Minus c="ml-auto size-[9px] text-[#777]" />
          <S c="ml-[31px] size-[9px] text-[#e4e4e4]"><path d="M1 1h14v14H1z" /></S>
          <X c="ml-[31px] mr-[16px] size-[10px] text-[#777]" sw={0.9} />
        </div>
        <div className="flex flex-1 items-center justify-between pl-[11px] pr-[11px]">
          <Fit c="mb-[2px] w-[97px] font-bold">Uninstalling XAMPP</Fit>
          <Xampp c="mb-[2px] size-[34px]" />
        </div>
      </div>
      <Fit c="ml-[10px] mt-[13px] w-[72px] leading-[18px]">Uninstall Status</Fit>
      <Fit c="mt-[16px] w-[94px] self-center leading-[18px]">Uninstalling XAMPP</Fit>
      <div className="mx-[17px] mt-[16px] h-[20px] border border-[#bcbcbc] bg-[#e6e6e6]" />
      <div className="mx-[4px] mt-[150px] h-px bg-[#a8a8a8]" />
      <div className="mt-[15px] flex justify-end gap-[5px] pr-[6px] text-[#838383]">
        {[["< Back", "w-[31px]"], ["Next >", "w-[31px]"], ["Cancel", "w-[31px]"]].map(([t, w]) => (
          <div key={t} className="flex h-[21px] w-[66.300px] items-center justify-center border border-[#bfbfbf] bg-[#cccccc]"><Fit c={w}>{t}</Fit></div>
        ))}
      </div>
    </div>
  );
}

/* ---------- file explorer ---------- */
const Arrow = ({ c = "h-[15px] w-[14px]" }: { c?: string }) => (
  <svg viewBox="0 0 14 15" className={`shrink-0 ${c}`}><path d="M4.500 0h5v7H14l-7 8-7-8h4.500z" fill="#3a8edb" stroke="#2a78c2" strokeWidth=".5" /></svg>
);
const Cloud = () => <svg viewBox="0 0 16 11" className="h-[10px] w-[15px] shrink-0"><path d="M3 10.500C-1 10-.5 5 3 5c1-5 8-6 9-1.500 4 0 5 6 1 7z" fill="#0f6cbd" /><path d="M2 10c1-4 6-5 8-3 5-1 6 3 4 3.500H3z" fill="#2a9bea" /></svg>;
const nav: { icon: ReactNode; t: string; w: string; sub?: boolean; row: string }[] = [
  { icon: <svg viewBox="0 0 16 16" className="size-[12px]"><path d="M8 0l2 5.500 6 .5-4.500 3.700L13 16l-5-3.500L3 16l1.500-6.300L0 6l6-.5z" fill="#3a9de8" /></svg>, t: "Quick access", w: "w-[60px]", row: "h-[28.500px]" },
  { icon: <Cloud />, t: "OneDrive", w: "w-[43.500px]", row: "h-[28.500px]" },
  { icon: <Cloud />, t: "OneDrive - Person", w: "w-[84.500px]", row: "h-[28.500px]" },
  { icon: <svg viewBox="0 0 16 14" className="h-[13px] w-[15px]"><rect x=".5" y=".5" width="15" height="9.500" fill="#4db0f2" stroke="#6f8fa8" /><path d="M1 13h14" stroke="#9aa7b2" strokeWidth="1.500" /></svg>, t: "This PC", w: "w-[34px]", row: "h-[25px] pt-[3.500px]" },
  { icon: <svg viewBox="0 0 14 14" className="size-[14px]"><path d="M7 0l6 2.500v8.500L7 14l-6-3V2.500z" fill="#2fb4d6" /><path d="M7 4.500l6-2v8.500L7 14z" fill="#0f8fb8" /><path d="M7 0l6 2.500-6 2-6-2z" fill="#9fe4f2" /></svg>, t: "3D Objects", w: "w-[50px]", sub: true, row: "h-[21.300px]" },
  { icon: <svg viewBox="0 0 14 11" className="h-[11px] w-[14px]"><rect width="14" height="11" fill="#1181dc" /><rect x="1" y="1" width="12" height="8" fill="#1e9af5" /></svg>, t: "Desktop", w: "w-[38px]", sub: true, row: "h-[21.300px]" },
  { icon: <svg viewBox="0 0 11 14" className="h-[14px] w-[11px]"><path d="M.5.500h7l3 3v10H.5z" fill="#fff" stroke="#8a98a5" /><path d="M2.500 5h6M2.500 7h6M2.500 9h6M2.500 11h6" stroke="#4a9bd4" /></svg>, t: "Documents", w: "w-[54px]", sub: true, row: "h-[21.300px]" },
  { icon: <Arrow c="h-[14px] w-[13px]" />, t: "Downloads", w: "w-[52.500px]", sub: true, row: "h-[21.300px] bg-[#d9d9d9]" },
  { icon: <svg viewBox="0 0 12 14" className="h-[14px] w-[11px]"><path d="M5 0c1 3 6 3 5.500 8C10 6 8 5 6.500 5v6.500C6 15 0 14.500 0 11.500 0 9 3 8.500 5 9.500z" fill="#1f8fe0" /></svg>, t: "Music", w: "w-[28px]", sub: true, row: "h-[21.300px]" },
  { icon: <svg viewBox="0 0 14 11" className="h-[11px] w-[14px]"><rect x=".5" y=".5" width="13" height="10" fill="#fff" stroke="#8f9aa3" /><rect x="2" y="2" width="10" height="7" fill="#a9d2f0" /><path d="M2 9V6l4-1 6 3v1z" fill="#2f6ea3" /></svg>, t: "Pictures", w: "w-[37px]", sub: true, row: "h-[21.300px]" },
  { icon: <svg viewBox="0 0 13 13" className="size-[12px]"><rect width="13" height="13" fill="#3a3a40" /><rect x="3" y="1" width="7" height="5" fill="#5b7fc0" /><rect x="3" y="7" width="7" height="5" fill="#b98948" /><path d="M1.500 1v12M11.500 1v12" stroke="#ddd" strokeDasharray="1 1" /></svg>, t: "Videos", w: "w-[31px]", sub: true, row: "h-[21.300px]" },
  { icon: <svg viewBox="0 0 14 12" className="h-[12px] w-[14px]"><path d="M0 0h3v3H0zM4 0h3v3H4zM0 4h3v3H0zM4 4h3v3H4z" fill="#29a9e0" /><path d="M2 8h12v4H2z" fill="#5d6266" /><path d="M4 6h8l2 2H2z" fill="#b5babd" /></svg>, t: "Local Disk (C:", w: "w-[64px]", sub: true, row: "h-[21.300px]" },
  { icon: <svg viewBox="0 0 16 13" className="h-[12px] w-[15px]"><circle cx="11" cy="5" r="5" fill="#6db4dc" /><path d="M0 4h10v7H0z" fill="#2b8fd8" /><path d="M2 12.500h7" stroke="#7d8c98" /></svg>, t: "Network", w: "w-[40px]", row: "h-[31.900px] pt-[3.400px]" },
];

const Thumb = ({ d }: { d: string }) => (
  <svg viewBox="0 0 20 28" className="h-[28px] w-[20px]"><rect x=".8" y=".8" width="18.400" height="26.400" fill="#fff" stroke="#111" strokeWidth="1.300" /><path d={d} fill="#000" /></svg>
);
type FileRow = { icon: ReactNode; n: string; w: string; k: string; kw: string; v: string; vw: string; d: string; s: string; sw: string; sel?: boolean; frame?: boolean; last?: boolean };
const today: FileRow[] = [
  { icon: <AnyTile c="-ml-px size-[28px]" />, n: "AnyDesk.exe", w: "w-[73.500px]", k: "Type:", kw: "w-[24.500px]", v: "Application", vw: "w-[54px]", d: "5/23/2023 8:18 PM", s: "3.85 MB", sw: "w-[37px]" },
  { icon: <svg viewBox="0 0 27 17" className="h-[17px] w-[27px]"><rect width="27" height="17" fill="#3a3a3a" /><rect x="4" y="1.500" width="19" height="14" fill="#b9c6d4" /><rect x="9" y="5" width="9" height="10" fill="#24262b" /><path d="M2 1v16M25 1v16" stroke="#fff" strokeWidth="2" strokeDasharray="2 1.500" /></svg>, n: "bandicam 2023-05-23 19-49-57-789.mp4", w: "w-[242.500px]", k: "Length:", kw: "w-[34.500px]", v: "00:20:22", vw: "w-[37.500px]", d: "5/23/2023 8:12 PM", s: "77.2 MB", sw: "w-[37px]", frame: true },
  { icon: <svg viewBox="0 0 28 26" className="h-[26px] w-[28px]"><rect width="28" height="8.500" fill="#b3202d" /><rect y="8.700" width="28" height="8.500" fill="#4a479c" /><rect y="17.400" width="28" height="8.500" fill="#1e8738" /><path d="M2 1v7M5 1v7M2 10v6M2 18v7" stroke="#e2b23a" strokeWidth="1.500" /><rect x="10" y="0" width="8" height="26" fill="#c4642a" /><rect x="9.500" y="4" width="9" height="10" rx="2" fill="#f0a42c" /><rect x="11.500" y="12" width="5" height="6" fill="#f4f0e6" /></svg>, n: "cm82-procurely.zip", w: "w-[112.500px]", k: "Type:", kw: "w-[24.500px]", v: "WinRAR ZIP archive", vw: "w-[93px]", d: "5/23/2023 7:41 PM", s: "6.10 MB", sw: "w-[37px]" },
  { icon: <svg viewBox="0 0 20 26" className="h-[26px] w-[20px]"><path d="M.6.600h13.400l5.400 5.400v19.400H.6z" fill="#fbfbfb" stroke="#a9a9a9" strokeWidth="1.200" /><path d="M14 .6V6h5.400" fill="none" stroke="#a9a9a9" /><circle cx="8" cy="12" r="3.500" fill="none" stroke="#9aa3aa" strokeWidth="2.500" strokeDasharray="2 .8" /><circle cx="14" cy="18" r="2" fill="none" stroke="#9aa3aa" strokeWidth="2" /></svg>, n: "gcapi.dll", w: "w-[50px]", k: "Type:", kw: "w-[24.500px]", v: "Application extension", vw: "w-[102px]", d: "5/23/2023 8:18 PM", s: "385 KB", sw: "w-[31px]" },
  { icon: <Thumb d="M2 1h15v4h1v5h-4v2H9V9H7v2H3zM4 13h4v1H4zM12 13h4v1h-4zM3 16h4v1H3zM10 16h6v1h-6zM3 19h3v1H3zM9 19h8v3H9zM3 23h14v2H3z" />, n: "ProposalFinal_Application_Form.docx", w: "w-[219.500px]", k: "Authors:", kw: "w-[38.500px]", v: "Julius Garcia", vw: "w-[58px]", d: "5/23/2023 2:34 PM", s: "177 KB", sw: "w-[31px]" },
  { icon: <Box c="size-[24px]" shield />, n: "xampp-windows-x64-7.4.27-1-VC15-installer (1).exe", w: "w-[304.500px]", k: "Type:", kw: "w-[24.500px]", v: "Application", vw: "w-[54px]", d: "5/23/2023 8:55 PM", s: "160 MB", sw: "w-[34.500px]", sel: true },
  { icon: <Box c="size-[24px]" shield />, n: "xampp-windows-x64-8.2.4-0-VS16-installer.exe", w: "w-[277px]", k: "Type:", kw: "w-[24.500px]", v: "Application", vw: "w-[54px]", d: "5/23/2023 8:36 PM", s: "148 MB", sw: "w-[34.500px]", last: true },
];
const yesterday: FileRow[] = [
  { icon: <Thumb d="M9 2h3l3 2v1H7V4zM4 6h5v1H4zM10 7h7v2h-6zM5 9h5v1H5zM8 11h5v1H8zM6 14h11v2h-1v2h1v6H5v-2H3v-5h3z" />, n: "Chapter-2 (1).docx", w: "w-[109px]", k: "Authors:", kw: "w-[38.500px]", v: "June Ileana Arce", vw: "w-[76px]", d: "5/22/2023 5:11 PM", s: "549 KB", sw: "w-[31px]" },
  { icon: <svg viewBox="0 0 24 27" className="-ml-px h-[27px] w-[24px]"><path d="M4.500.600h13l6 6v19.800h-19z" fill="#fff" stroke="#8d8d8d" strokeWidth="1.100" /><path d="M17.500.600v6h6" fill="none" stroke="#8d8d8d" /><path d="M15 12h6M15 15h6" stroke="#5aa0dd" strokeWidth="1.400" /><rect y="6" width="14" height="14" fill="#185abd" /><path d="M3 9.500l2 7 2-6 2 6 2-7" stroke="#fff" strokeWidth="1.500" fill="none" /></svg>, n: "CHAPTER-2 (2).docx", w: "w-[119px]", k: "Authors:", kw: "w-[38.500px]", v: "ANDRIEY NACION", vw: "w-[86.500px]", d: "5/22/2023 5:12 PM", s: "43.5 KB", sw: "w-[34px]", last: true },
];

function Pair({ k, kw, v, vw }: { k: string; kw: string; v: string; vw: string }) {
  return <div className="flex h-[15px] items-center gap-[4px]"><Fit c={`text-[#6f6f6f] ${kw}`}>{k}</Fit><Fit c={`text-black ${vw}`}>{v}</Fit></div>;
}

function Row({ f }: { f: FileRow }) {
  return (
    <div className={`relative h-[42.700px] w-[711px] pl-[3px] ${f.sel ? "bg-[#cce8ff] outline-1 -outline-offset-1 outline-[#99d1ff]" : ""}`}>
      <div className={`flex h-full w-[700px] border-b text-[11.500px] leading-[15px] ${f.last || f.sel ? "border-transparent" : "border-[#dcdcdc]"}`}>
        <div className="flex w-[30px] items-center justify-center pt-px">{f.icon}</div>
        <div className="ml-[5px] w-[266.500px] pt-[4px]">
          <div className="flex h-[19px] items-center text-[13.500px] text-[#111]"><Fit c={f.w}>{f.n}</Fit></div>
          <Pair k={f.k} kw={f.kw} v={f.v} vw={f.vw} />
        </div>
        <div className="w-[142px] pt-[7.500px]">
          {f.frame && <Pair k="Frame height:" kw="w-[64.500px]" v="1080" vw="w-[21px]" />}
          {f.frame && <Pair k="Frame width:" kw="w-[61px]" v="1920" vw="w-[21px]" />}
        </div>
        <div className="pt-[7.500px]">
          <Pair k="Date modified:" kw="w-[69px]" v={f.d} vw="w-[85.500px]" />
          <Pair k="Size:" kw="w-[20px]" v={f.s} vw={f.sw} />
        </div>
      </div>
    </div>
  );
}

function GroupHead({ t, w, c }: { t: string; w: string; c: string }) {
  return (
    <div className={`flex items-center pl-[6px] text-[13.500px] text-[#34478e] ${c}`}>
      <Down c="h-[6px] w-[9px] text-[#555]" />
      <Fit c={`ml-[5px] ${w}`}>{t}</Fit>
      <span className="ml-[7px] mr-[8px] h-px flex-1 bg-[#e0e0e0]" />
    </div>
  );
}

function ExplorerWindow() {
  return (
    <div className="absolute left-[742px] top-[144px] flex h-[549px] w-[871px] flex-col border border-[#c9c9c9] bg-white text-[11.500px] text-[#222] shadow-[0_3px_14px_rgba(0,0,0,0.420)]">
      <div className="flex h-[26px] items-center pl-[8px]">
        <Arrow />
        <span className="ml-[6px] h-[11px] w-px bg-[#888]" />
        <svg viewBox="0 0 12 14" className="ml-[9px] h-[14px] w-[12px]"><path d="M.5.500h8l3 3v10H.5z" fill="#fff" stroke="#8d8d8d" /><path d="M3 8l2.500 3L9.500 5" stroke="#d2622a" strokeWidth="1.600" fill="none" /></svg>
        <svg viewBox="0 0 12 14" className="ml-[8px] h-[14px] w-[12px]"><path d="M0 0h12v14H0z" fill="#f7dc82" /><path d="M0 0h12v14H0z" fill="none" stroke="#e5bf55" /></svg>
        <svg viewBox="0 0 6 6" className="ml-[7px] size-[6px]"><path d="M0 .5h6" stroke="#222" /><path d="M0 2.500h6L3 6z" fill="#222" /></svg>
        <span className="ml-[8px] h-[11px] w-px bg-[#888]" />
        <div className="ml-[112px] mt-[3px] flex h-[24px] w-[106px] items-center justify-center bg-[#e9c9fe] text-[#4f3f58]"><Fit c="w-[37px]">Manage</Fit></div>
        <Fit c="ml-[11px] w-[53px] text-black">Downloads</Fit>
        <Minus c="ml-auto size-[9px] text-black" />
        <S c="ml-[31px] size-[9px] text-black" sw={1.800}><path d="M1 1h14v14H1z" /></S>
        <X c="ml-[31px] mr-[16px] size-[10px] text-black" sw={0.900} />
      </div>
      <div className="flex h-[22px] items-center border-b border-[#dadada]">
        <div className="flex h-full w-[50px] items-center justify-center bg-[#0063b1] text-white"><Fit c="w-[16px]">File</Fit></div>
        <Fit c="ml-[13px] w-[26.500px]">Home</Fit>
        <Fit c="ml-[25.500px] w-[26px]">Share</Fit>
        <Fit c="ml-[25.500px] w-[22.500px]">View</Fit>
        <div className="ml-[15px] flex h-full w-[106px] items-center justify-center border-x border-[#e2e2e2]"><Fit c="w-[80px]">Application Tools</Fit></div>
        <Down c="ml-auto h-[5px] w-[8px] text-[#aaa]" sw={1.800} />
        <span className="ml-[9px] mr-[3px] flex size-[14px] items-center justify-center rounded-full bg-[#0a63bd] text-[11px] font-bold leading-none text-white">?</span>
      </div>
      <div className="mt-[4px] flex h-[27px] items-center pl-[11px] text-[#666]">
        <S c="size-[11px]" sw={2}><path d="M16 8H1.500M8 1.500L1.500 8 8 14.500" /></S>
        <S c="ml-[16px] size-[11px] text-[#d5d5d5]" sw={1.800}><path d="M0 8h14.500M8 1.500L14.500 8 8 14.500" /></S>
        <Down c="ml-[12px] h-[4px] w-[6px] text-[#999]" sw={2} />
        <S c="ml-[11px] mt-[2px] h-[12px] w-[10px]" sw={2}><path d="M8 16V1.500M1.500 8L8 1.500 14.500 8" /></S>
        <div className="ml-[7px] flex h-full w-[574px] items-center border border-[#d9d9d9] pl-[2px]">
          <Arrow />
          <Right c="ml-[6px] h-[7px] w-[5px] text-[#777]" />
          <Fit c="ml-[7px] w-[34.500px] text-[#222]">This PC</Fit>
          <Right c="ml-[8px] h-[7px] w-[5px] text-[#777]" />
          <Fit c="ml-[7px] w-[52.500px] text-[#222]">Downloads</Fit>
          <Right c="ml-[8px] h-[7px] w-[5px] text-[#777]" />
          <Down c="ml-auto h-[6px] w-[8px]" sw={2} />
          <div className="ml-[8px] flex h-full w-[27px] items-center justify-center border-l border-[#d9d9d9]">
            <S c="size-[9px]" sw={2.400}><path d="M4 3a6.500 6.500 0 1 0 7 0M4 0v5H0" /></S>
          </div>
        </div>
        <div className="ml-[11px] flex h-full w-[179px] items-center border border-[#d9d9d9] pl-[12px] text-[#6d6d6d]">
          <Lens c="size-[11px] text-[#a4a4a4]" sw={1.600} />
          <Fit c="ml-[12px] w-[86px]">Search Downloads</Fit>
        </div>
      </div>
      <div className="mt-[6px] flex h-[442px] overflow-hidden">
        <div className="flex w-[129px] shrink-0 flex-col border-r border-[#f1f1f1] pt-[10.700px] text-[#111]">
          {nav.map((n) => (
            <div key={n.t} className={`mr-[2px] flex shrink-0 items-center ${n.sub ? "pl-[28px]" : "pl-[21px]"} ${n.row}`}>
              <span className="flex w-[15px] shrink-0 justify-center">{n.icon}</span>
              <Fit c={`ml-[5px] ${n.w}`}>{n.t}</Fit>
            </div>
          ))}
        </div>
        <div className="flex flex-1 flex-col">
          <GroupHead t="Today (7)" w="w-[54.500px]" c="h-[31px] shrink-0 pt-[3px]" />
          <div className="pl-[14px]">{today.map((f) => <Row key={f.n} f={f} />)}</div>
          <GroupHead t="Yesterday (6)" w="w-[75px]" c="h-[27.700px] shrink-0" />
          <div className="pl-[14px]">{yesterday.map((f) => <Row key={f.n} f={f} />)}</div>
        </div>
        <div className="mr-[2px] flex w-[13px] flex-col items-center bg-[#f0f0f0] text-[#505050]">
          <Up c="mt-[5px] h-[5px] w-[7px]" sw={2.200} />
          <div className="mt-[5px] h-[20px] w-full bg-[#cdcdcd]" />
          <Down c="mb-[4px] mt-auto h-[5px] w-[7px]" sw={2.200} />
        </div>
      </div>
      <div className="flex h-[20px] items-center pl-[12.500px] text-[#2f3d5c]">
        <Fit c="w-[44.500px]">213 items</Fit>
        <span className="ml-[9px] h-[10px] w-px bg-[#e4e4e4]" />
        <Fit c="ml-[9px] w-[69.500px]">1 item selected</Fit>
        <Fit c="ml-[6.500px] w-[34px]">160 MB</Fit>
        <span className="ml-[9px] h-[10px] w-px bg-[#e4e4e4]" />
        <S c="ml-auto h-[11px] w-[15px] text-[#777]" sw={1}><path d="M.5.500h3v15h-3zM.500 5h3M.500 10h3M6 2.500h4M12 2.500h4M6 8h4M12 8h4M6 13h4M12 13h4" /></S>
        <svg viewBox="0 0 13 11" className="ml-[6px] mr-[7px] h-[11px] w-[13px]"><rect x=".5" y=".5" width="12" height="10" fill="#e8f2fb" stroke="#8496a8" /><rect x="2" y="3" width="9" height="5" fill="#6fb0dd" /><path d="M2 8V6l9 2z" fill="#2d5d8a" /></svg>
      </div>
    </div>
  );
}

/* ---------- annotations ---------- */
function Annotations() {
  return (
    <svg viewBox="440 530 1050 320" className="absolute left-[440px] top-[530px] h-[320px] w-[1050px]" fill="none" stroke="#ed1c24" strokeWidth="5" strokeLinecap="round" strokeLinejoin="round">
      <path d="M981.500 545.500h495v53h-495z" strokeLinejoin="miter" />
      <path d="M456 840L617 758 750 691.500 850 643.500 963 588" />
      <path d="M865 577l98 10.500L943.500 645" />
    </svg>
  );
}

/* ---------- taskbars ---------- */
function Slot({ children, on = false, run = true }: { children: ReactNode; on?: boolean; run?: boolean }) {
  return (
    <div className={`relative flex h-full w-[48.900px] shrink-0 items-center justify-center ${on ? "bg-[#4c4c4c]" : ""}`}>
      {children}
      {run && <span className={`absolute bottom-0 h-[2px] bg-[#76b9ed] ${on ? "w-full" : "w-10"}`} />}
    </div>
  );
}
function Apps() {
  return (
    <>
      <Slot run={false}><Edge c="size-6" /></Slot>
      <Slot><Chrome c="size-6" /></Slot>
      <Slot><Explorer c="size-6" /></Slot>
      <Slot><VsCode c="size-6" /></Slot>
      <Slot><Rec c="size-6" /></Slot>
      <Slot><Notepad c="size-6" /></Slot>
      <Slot on><AnyTile c="size-6" /></Slot>
      <Slot><Npp c="size-6" /></Slot>
    </>
  );
}

function RSlot({ children, on = false }: { children: ReactNode; on?: boolean }) {
  return (
    <div className={`relative flex h-full w-[43.500px] shrink-0 items-center justify-center ${on ? "bg-[#5f6063]" : ""}`}>
      {children}
      <span className={`absolute bottom-0 h-[2px] bg-[#76b9ed] ${on ? "w-full" : "w-9"}`} />
    </div>
  );
}

function RemoteTaskbar() {
  return (
    <div className="flex h-[36px] items-center bg-linear-to-r from-[#333436] via-[#2e2f31] to-[#4b4b4b] text-[13px] text-white">
      <div className="flex h-full w-[43px] items-center justify-center bg-[#444546]"><Win c="size-[15px]" /></div>
      <div className="flex h-[34px] w-[305px] items-center self-start bg-[#f2f2f2] pl-[10px] text-[13.500px] text-[#3a3a3a]">
        <Lens c="size-[15px] text-[#222]" sw={1.200} />
        <Fit c="ml-[10px] w-[114px]">Type here to search</Fit>
        <Turtle c="ml-auto mr-[7px] h-[28px] w-[58px]" />
      </div>
      <div className="ml-[2.500px] flex h-full">
        <RSlot on><Explorer c="size-[20px]" /></RSlot>
        <RSlot><Chrome c="size-[21px]" girl /></RSlot>
        <RSlot><Vlc c="h-[21px] w-[18px]" /></RSlot>
        <RSlot><Edge c="size-[22px]" /></RSlot>
        <RSlot><AnyTile c="size-[21px]" /></RSlot>
        <RSlot><Atom c="size-[21px]" /></RSlot>
        <RSlot><Box c="size-[18px]" /></RSlot>
        <RSlot><Cmd c="h-[16px] w-[20px]" /></RSlot>
      </div>
      <div className="ml-auto flex h-full items-center">
        <Moon c="h-[21px] w-[23px]" />
        <Fit c="ml-[7px] w-[26px]">29°C</Fit>
        <Fit c="ml-[8px] w-[77px]">Mostly cloudy</Fit>
        <Up c="ml-[21px] h-[7px] w-[11px]" />
        <svg viewBox="0 0 14 14" className="ml-[8px] size-[13px]"><path d="M0 1.500C4 1.500 6 1 7 0c1 1 3 1.500 7 1.500C14 8 12 12 7 14 2 12 0 8 0 1.500z" fill="#d9432c" /><path d="M7 0c1 1 3 1.500 7 1.500V7H7zM7 7v7C3 12 1 10 .3 7z" fill="#f4f4f4" /></svg>
        <svg viewBox="0 0 16 16" className="ml-[8px] size-[15px]"><path d="M1 2c3.500 0 5-.5 6-1.500C8 1.500 9.500 2 13 2c0 6-1 10-6 12C2 12 1 8 1 2z" fill="#fff" /><path d="M7 1v13M1 7h12" stroke="#333" /><circle cx="11.500" cy="11.500" r="4.500" fill="#16954a" /><path d="M9.500 11.500l1.500 1.700 2.700-3.200" stroke="#fff" fill="none" /></svg>
        <S c="ml-[8px] h-[15px] w-[12px]"><path d="M1 5h11v7H1zM12 7l3-1v5l-3-1M3 2c2-2 7-2 9 0M3 14.500c2 2 7 2 9 0" /></S>
        <S c="ml-[7px] h-[13px] w-[15px]"><path d="M5 4h10.500v8H5M1 1h4v6H1zM3 7v8h6M10 12v3M7 15h6" /></S>
        <Volume c="ml-[6px] size-[15px]" />
        <div className="ml-[7px] flex w-[50px] flex-col items-center text-[11px] leading-[16px]"><Fit c="w-[38px]">8:55 PM</Fit><Fit c="w-[46px]">5/23/2023</Fit></div>
        <Note c="ml-[13px] h-[14px] w-[15px]" />
        <span className="ml-[17px] mr-[4px] h-full w-px bg-[#777]" />
      </div>
    </div>
  );
}

function MainTaskbar() {
  return (
    <div className="flex h-10 items-center bg-[#211f20] text-[14px] text-white">
      <div className="flex w-12 justify-center"><Win c="size-4" /></div>
      <div className="flex h-[38px] w-[288px] items-center bg-[#f2f2f2] pl-[11px] text-[15px] text-[#2a2a2a]">
        <Lens c="size-[17px] text-[#222]" sw={1.200} />
        <Fit c="ml-[12px] w-[127px]">Type here to search</Fit>
        <Turtle c="ml-auto mr-[9px] h-[32px] w-[64px]" />
      </div>
      <div className="ml-[2.500px] flex h-full"><Apps /></div>
      <div className="ml-auto flex h-full items-center">
        <Moon c="size-6" two />
        <Fit c="ml-[8px] w-[29px]">28°C</Fit>
        <Fit c="ml-[9px] w-[79px]">Partly cloudy</Fit>
        <Up c="ml-[25px] h-[7px] w-[12px]" />
        <S c="ml-[12px] size-[14px]" sw={1.300}><path d="M2 15C2 7 8 2 15 2M5.500 15c0-5 4-9.500 9.500-9.500M9 15c0-3 2.500-6 6-6" /><circle cx="14" cy="14" r="1.800" fill="#fff" stroke="none" /></S>
        <Volume c="ml-[8px] size-[17px]" />
        <S c="ml-[7px] h-[13px] w-[16px]"><path d="M5 4h10v9H5zM1 1v3h4V1M3 4v9h2M15.500 7v3" /><path d="M8 6h5v5H8z" fill="#fff" /></S>
        <div className="ml-[8px] flex w-[56px] flex-col items-center text-[12px] leading-[18px]"><Fit c="w-[42px]">8:55 PM</Fit><Fit c="w-[52px]">5/23/2023</Fit></div>
        <div className="relative ml-[15px]">
          <Note c="size-4" />
          <span className="absolute left-[7px] top-[6px] flex size-[17px] items-center justify-center rounded-full border border-[#999] bg-[#333] text-[11px] leading-none">2</span>
        </div>
        <span className="ml-[21px] mr-[4px] h-full w-px bg-[#777]" />
      </div>
    </div>
  );
}

function SecondMonitor() {
  return (
    <div className="flex flex-1 flex-col bg-black pt-[902px]">
      <div className="flex h-10 items-center bg-[#1d1d1d] text-white">
        <div className="flex w-12 justify-center"><Win c="size-4" /></div>
        <div className="flex w-12 justify-center"><Lens c="size-[22px]" sw={1.400} /></div>
        <div className="ml-[2.500px] flex h-full"><Apps /></div>
        <div className="ml-auto mr-[6px] flex flex-col items-center text-[12px] leading-[18px]"><Fit c="w-[42px]">8:55 PM</Fit><Fit c="w-[52px]">5/23/2023</Fit></div>
      </div>
    </div>
  );
}

export default function App() {
  return (
    <div className="flex h-[1080px] w-[3286px] overflow-hidden bg-black font-['Open_Sans','Noto_Sans',sans-serif]">
      <div className="relative flex w-[1920px] shrink-0 flex-col">
        <TitleBar />
        <AddressBar />
        <div className="flex h-[960px] bg-[linear-gradient(#808080_88%,#606060)] pl-[105px]">
          <div className="relative flex w-[1709px] flex-col border-x border-[#333]">
            <TabStrip />
            <BrowserBars />
            <DrivePage />
            <div className="flex h-[14px] items-center bg-[#f1f1f1] text-[#888]">
              <svg viewBox="0 0 6 8" className="ml-[5px] h-[8px] w-[5px]"><path d="M6 0v8L0 4z" fill="#a3a3a3" /></svg>
              <div className="ml-[5px] h-[11px] w-[1675px] bg-[#c1c1c1]" />
              <svg viewBox="0 0 6 8" className="ml-[7px] h-[8px] w-[5px]"><path d="M0 0v8l6-4z" fill="#505050" /></svg>
            </div>
            <div className="flex h-[50px] items-center border-y border-[#e0c5cb] bg-[#ffdde3] pl-[18px] text-[12.500px] text-[#453238]">
              <Box c="size-[12px]" />
              <Fit c="ml-[13px] w-[122px]">xampp-windows-x....exe</Fit>
              <Up c="ml-[19px] h-[6px] w-[9px]" sw={2} />
              <span className="ml-[17px] h-[39px] w-px bg-[#d3b2ba]" />
              <div className="ml-auto flex h-[29px] w-[69px] items-center justify-center rounded border border-[#e9d3d8] text-[12px] text-[#3f68c4]"><Fit c="w-[41px] font-medium">Show all</Fit></div>
              <X c="ml-[11px] mr-[11px] size-[10px] text-[#33272b]" sw={1.900} />
            </div>
            <RemoteTaskbar />
            <HoverCard />
            <SetupDialog />
            <ExplorerWindow />
          </div>
        </div>
        <MainTaskbar />
        <Annotations />
        <div className="absolute left-[1599px] top-[944px] flex flex-col text-[#a8a8a8]/80">
          <Fit c="w-[157px] text-[19.500px] leading-[28px]">Activate Windows</Fit>
          <Fit c="w-[236px] text-[15px] leading-[19px]">Go to Settings to activate Windows.</Fit>
        </div>
      </div>
      <SecondMonitor />
    </div>
  );
}
